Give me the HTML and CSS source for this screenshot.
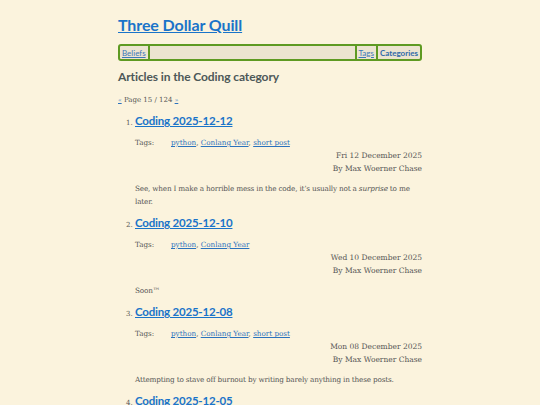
FILE: index.html
```html
<!DOCTYPE html>
<html>
<head>
<meta charset="utf-8">
<link rel="stylesheet" href="styles.css">
</head>
<body>
<div class="page">
  <h1 class="site-title"><a href="#">Three Dollar Quill</a></h1>
  <nav class="nav">
    <a href="#" class="nav-link first">Beliefs</a>
    <span class="nav-fill"></span>
    <a href="#" class="nav-link">Tags</a>
    <a href="#" class="nav-link current">Categories</a>
  </nav>
  <h2 class="section-title">Articles in the Coding category</h2>
  <p class="pager"><a href="#">«</a> Page 15 / 124 <a href="#">»</a></p>
  <ol class="articles">
    <li class="article">
      <h3 class="article-title"><a href="#">Coding 2025-12-12</a></h3>
      <div class="tags"><span class="tags-label">Tags:</span><span><a href="#">python</a>, <a href="#">Conlang Year</a>, <a href="#">short post</a></span></div>
      <div class="meta">Fri 12 December 2025<br>By Max Woerner Chase</div>
      <p class="summary">See, when I make a horrible mess in the code, it’s usually not a <em>surprise</em> to me later.</p>
    </li>
    <li class="article">
      <h3 class="article-title"><a href="#">Coding 2025-12-10</a></h3>
      <div class="tags"><span class="tags-label">Tags:</span><span><a href="#">python</a>, <a href="#">Conlang Year</a></span></div>
      <div class="meta">Wed 10 December 2025<br>By Max Woerner Chase</div>
      <p class="summary">Soon™</p>
    </li>
    <li class="article">
      <h3 class="article-title"><a href="#">Coding 2025-12-08</a></h3>
      <div class="tags"><span class="tags-label">Tags:</span><span><a href="#">python</a>, <a href="#">Conlang Year</a>, <a href="#">short post</a></span></div>
      <div class="meta">Mon 08 December 2025<br>By Max Woerner Chase</div>
      <p class="summary">Attempting to stave off burnout by writing barely anything in these posts.</p>
    </li>
    <li class="article">
      <h3 class="article-title"><a href="#">Coding 2025-12-05</a></h3>
      <div class="tags"><span class="tags-label">Tags:</span><span><a href="#">python</a>, <a href="#">Conlang Year</a></span></div>
      <div class="meta">Fri 05 December 2025<br>By Max Woerner Chase</div>
      <p class="summary">More progress.</p>
    </li>
  </ol>
</div>
</body>
</html>
```
FILE: styles.css
```css
html, body {
  margin: 0;
  padding: 0;
  background: #fbf3dd;
}
body {
  font-family: "DejaVu Serif", serif;
  color: #555;
  font-size: 7.5px;
}
.page {
  width: 304px;
  margin: 0 auto;
  padding-top: 14px;
}
a {
  color: #2b72bd;
}
.site-title {
  margin: 0;
  font-family: "Lato", sans-serif;
  font-size: 16px;
  font-weight: 700;
  line-height: 22px;
  letter-spacing: -0.1px;
}
.site-title a {
  color: #1a74c9;
}
.nav {
  display: flex;
  margin-top: 8px;
  border: 2px solid #5e9a22;
  border-radius: 3px;
  background: #ece4d0;
  height: 13px;
  align-items: stretch;
  font-family: "Lato", sans-serif;
  font-size: 8px;
}
.nav-link {
  display: flex;
  align-items: center;
  padding: 0 2px;
  border-left: 2px solid #5e9a22;
  color: #3b78b8;
}
.nav-link.first {
  border-left: none;
  border-right: 2px solid #5e9a22;
}
.nav-link.current {
  font-weight: 700;
  text-decoration: none;
  color: #2f6aa8;
}
.nav-fill {
  flex: 1;
}
.section-title {
  margin: 8px 0 0;
  font-family: "Lato", sans-serif;
  font-size: 12px;
  font-weight: 700;
  color: #4d5858;
  line-height: 16px;
  letter-spacing: -0.1px;
}
.pager {
  margin: 11px 0 0;
  font-size: 7px;
  color: #555;
}
.pager a {
  font-size: 6px;
}
.articles {
  margin: 8px 0 0;
  padding-left: 17px;
}
.article {
  font-size: 7px;
}
.article-title {
  margin: 0;
  font-family: "Lato", sans-serif;
  font-size: 11.5px;
  font-weight: 700;
  line-height: 18px;
  letter-spacing: -0.2px;
}
.article-title a {
  color: #1a74c9;
}
.tags {
  display: flex;
  margin-top: 7px;
  font-size: 7.2px;
  line-height: 12px;
}
.tags-label {
  width: 36px;
}
.meta {
  text-align: right;
  font-size: 7.5px;
  line-height: 12.5px;
  margin-top: 1px;
}
.summary {
  margin: 7px 0 6px;
  font-size: 7.3px;
  line-height: 13px;
  letter-spacing: -0.2px;
}
```
